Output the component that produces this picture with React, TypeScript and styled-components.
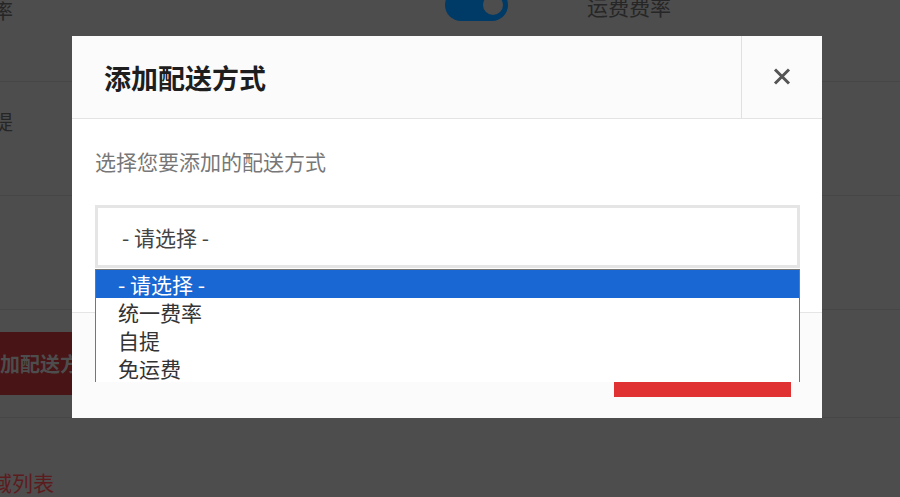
import styled, { createGlobalStyle } from "styled-components"

const GlobalStyle = createGlobalStyle`
html, body {
  margin: 0;
  padding: 0;
  background: #4d4d4d;
  font-family: "Noto Sans CJK SC", "Noto Sans", sans-serif;
}
* { box-sizing: border-box; }
`

// dimmed page behind the modal
const Page = styled.div`
position: relative;
width: 900px;
height: 497px;
overflow: hidden;
background: #4d4d4d;
`

const PageInner = styled.div`
margin-top: -40px;
margin-left: -120px;
width: 1100px;
`

const Row = styled.div<{ $h: number; $pt: number }>`
display: flex;
align-items: flex-start;
height: ${(p) => p.$h}px;
padding-top: ${(p) => p.$pt}px;
border-bottom: 1px solid #464646;
`

const Label = styled.div<{ $mt?: number }>`
width: 133px;
margin-top: ${(p) => p.$mt ?? 0}px;
text-align: right;
font-size: 20px;
line-height: 24px;
color: #262626;
`

const Toggle = styled.div`
margin-left: 432px;
width: 63px;
height: 32px;
border-radius: 16px;
background: #003a66;
display: flex;
align-items: center;
justify-content: flex-end;
padding-right: 5px;
`

const Knob = styled.span`
width: 20px;
height: 20px;
border-radius: 50%;
background: #4d4d4d;
`

const SideLabel = styled.div`
margin-left: 79px;
margin-top: 5px;
font-size: 21px;
line-height: 24px;
color: #262626;
`

const DangerButton = styled.div`
margin-left: 74px;
height: 63px;
padding: 0 26px;
display: flex;
align-items: center;
background: #481416;
color: #4d4d4d;
font-size: 20px;
font-weight: 700;
`

const LinkText = styled.div`
padding-left: 48px;
padding-top: 49px;
font-size: 21px;
color: #5c1c1e;
`

// modal
const Modal = styled.div`
position: absolute;
top: 36px;
left: 72px;
width: 750px;
height: 382px;
background: #fff;
display: flex;
flex-direction: column;
`

const Header = styled.div`
display: flex;
height: 83px;
background: #fbfbfb;
border-bottom: 1px solid #e3e3e3;
`

const Title = styled.h2`
flex: 1;
margin: 0;
padding-left: 32px;
display: flex;
align-items: center;
font-size: 27px;
font-weight: 700;
color: #1e1e1e;
`

const CloseBtn = styled.div`
width: 81px;
border-left: 1px solid #e0e0e0;
display: flex;
align-items: center;
justify-content: center;
padding-bottom: 2px;
`

const Body = styled.div`
position: relative;
padding: 28px 22px 0 23px;
height: 193px;
`

const Hint = styled.p`
margin: 0;
font-size: 21px;
line-height: 28px;
color: #777;
`

const SelectBox = styled.div`
margin-top: 30px;
height: 63px;
border: 3px solid #e5e5e5;
display: flex;
align-items: center;
padding-left: 24px;
font-size: 21px;
color: #444;
`

const Dropdown = styled.div`
position: absolute;
top: 150px;
left: 23px;
right: 22px;
height: 113px;
background: #fff;
border: 1px solid #767676;
border-bottom: none;
z-index: 2;
overflow: hidden;
`

const Option = styled.div<{ $active?: boolean }>`
height: 28px;
line-height: 28px;
padding-left: 22px;
font-size: 21px;
color: ${(p) => (p.$active ? "#fff" : "#333")};
background: ${(p) => (p.$active ? "#1967d2" : "transparent")};
`

const Footer = styled.div`
flex: 1;
background: #fbfbfb;
border-top: 1px solid #e5e5e5;
display: flex;
justify-content: flex-end;
align-items: flex-end;
padding: 0 31px 21px 0;
`

const PrimaryButton = styled.div`
width: 177px;
height: 64px;
background: #e03232;
`

const options = ["- 请选择 -", "统一费率", "自提", "免运费"]

const App = () => {
    return (
        <>
            <GlobalStyle />
            <Page>
                <PageInner>
                    <Row $h={122} $pt={29}>
                        <Label $mt={10}>统一费率</Label>
                        <Toggle><Knob /></Toggle>
                        <SideLabel>运费费率</SideLabel>
                    </Row>
                    <Row $h={114} $pt={28}>
                        <Label>自提</Label>
                    </Row>
                    <Row $h={114} $pt={28} />
                    <Row $h={108} $pt={22}>
                        <DangerButton>添加配送方式</DangerButton>
                    </Row>
                    <LinkText>配送区域列表</LinkText>
                </PageInner>

                <Modal>
                    <Header>
                        <Title>添加配送方式</Title>
                        <CloseBtn>
                            <svg width="18" height="17" viewBox="0 0 18 17">
                                <path d="M2 1.5 L16 15.5 M16 1.5 L2 15.5" stroke="#555" strokeWidth="3" />
                            </svg>
                        </CloseBtn>
                    </Header>
                    <Body>
                        <Hint>选择您要添加的配送方式</Hint>
                        <SelectBox>- 请选择 -</SelectBox>
                        <Dropdown>
                            {options.map((o, i) => (
                                <Option key={o} $active={i === 0}>{o}</Option>
                            ))}
                        </Dropdown>
                    </Body>
                    <Footer>
                        <PrimaryButton />
                    </Footer>
                </Modal>
            </Page>
        </>
    )
}

export default App
